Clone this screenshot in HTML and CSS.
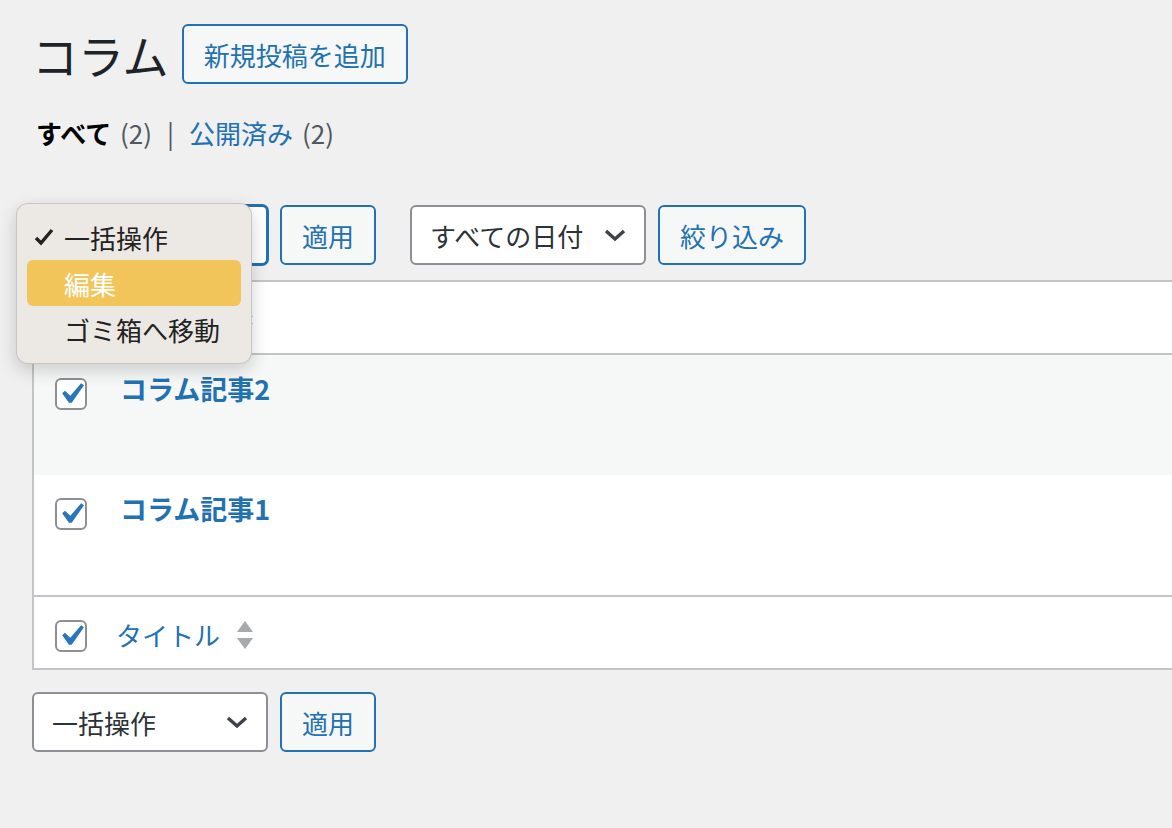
FILE: index.html
```html
<!DOCTYPE html>
<html lang="ja">
<head>
    <meta charset="UTF-8">
    <meta name="viewport" content="width=device-width, initial-scale=1.0">
    <title>コラム</title>
    <link rel="stylesheet" href="styles.css">
</head>
<body>
    <div class="wrap">
        <div class="page-head">
            <h1>コラム</h1>
            <a class="button" href="#">新規投稿を追加</a>
        </div>

        <ul class="subsubsub">
            <li class="current">すべて <span class="count">(2)</span></li>
            <li class="sep">|</li>
            <li><a href="#">公開済み</a> <span class="count">(2)</span></li>
        </ul>

        <div class="tablenav top">
            <div class="select focused">
                <span>一括操作</span>
                <svg class="chevron" viewBox="0 0 22 12" width="22" height="12"><path d="M2 2l9 8 9-8" fill="none" stroke="#3c434a" stroke-width="3.4"/></svg>
            </div>
            <a class="button" href="#">適用</a>
            <div class="select date">
                <span>すべての日付</span>
                <svg class="chevron" viewBox="0 0 22 12" width="22" height="12"><path d="M2 2l9 8 9-8" fill="none" stroke="#3c434a" stroke-width="3.4"/></svg>
            </div>
            <a class="button" href="#">絞り込み</a>
        </div>

        <table class="list-table">
            <thead>
                <tr>
                    <td class="check-col"><span class="checkbox"><svg viewBox="0 0 20 20" width="42" height="42"><path d="M14.83 4.89l1.34.94-5.81 8.38H9.02L5.78 9.67l1.34-1.25 2.57 2.4z" fill="#2a76bb"/></svg></span></td>
                    <th class="title-col"><a href="#">タイトル</a>
                        <svg class="sort" viewBox="0 0 18 30" width="18" height="30"><path d="M9 1l8 11H1z M1 18h16l-8 11z" fill="#a7aaad"/></svg>
                    </th>
                </tr>
            </thead>
            <tbody>
                <tr class="alt">
                    <td class="check-col"><span class="checkbox"><svg viewBox="0 0 20 20" width="42" height="42"><path d="M14.83 4.89l1.34.94-5.81 8.38H9.02L5.78 9.67l1.34-1.25 2.57 2.4z" fill="#2a76bb"/></svg></span></td>
                    <td class="title-cell"><a href="#">コラム記事2</a></td>
                </tr>
                <tr>
                    <td class="check-col"><span class="checkbox"><svg viewBox="0 0 20 20" width="42" height="42"><path d="M14.83 4.89l1.34.94-5.81 8.38H9.02L5.78 9.67l1.34-1.25 2.57 2.4z" fill="#2a76bb"/></svg></span></td>
                    <td class="title-cell"><a href="#">コラム記事1</a></td>
                </tr>
            </tbody>
            <tfoot>
                <tr>
                    <td class="check-col"><span class="checkbox"><svg viewBox="0 0 20 20" width="42" height="42"><path d="M14.83 4.89l1.34.94-5.81 8.38H9.02L5.78 9.67l1.34-1.25 2.57 2.4z" fill="#2a76bb"/></svg></span></td>
                    <th class="title-col"><a href="#">タイトル</a>
                        <svg class="sort" viewBox="0 0 18 30" width="18" height="30"><path d="M9 1l8 11H1z M1 18h16l-8 11z" fill="#a7aaad"/></svg>
                    </th>
                </tr>
            </tfoot>
        </table>

        <div class="tablenav bottom">
            <div class="select">
                <span>一括操作</span>
                <svg class="chevron" viewBox="0 0 22 12" width="22" height="12"><path d="M2 2l9 8 9-8" fill="none" stroke="#3c434a" stroke-width="3.4"/></svg>
            </div>
            <a class="button" href="#">適用</a>
        </div>
    </div>

    <!-- open menu of the top bulk action select -->
    <ul class="popup-menu">
        <li class="checked"><svg class="tick" viewBox="0 0 20 20" width="20" height="20"><path d="M2 11l5 5L18 3" fill="none" stroke="#222" stroke-width="3.4"/></svg>一括操作</li>
        <li class="hover">編集</li>
        <li>ゴミ箱へ移動</li>
    </ul>
</body>
</html>
```

FILE: styles.css
```css
body {
    margin: 0;
    padding: 0;
    font-family: "Noto Sans CJK JP", "Noto Sans", sans-serif;
    font-size: 26px;
    color: #1d2327;
    background-color: #f0f0f1;
    overflow: hidden;
    position: relative;
    height: 828px;
}

a {
    color: #2271b1;
    text-decoration: none;
}

.wrap {
    padding-left: 32px;
}

.page-head {
    display: flex;
    align-items: center;
    gap: 13px;
    padding-top: 24px;
}

.page-head h1 {
    margin: 0;
    font-size: 46px;
    font-weight: 400;
    line-height: 60px;
}

.button {
    display: inline-flex;
    align-items: center;
    box-sizing: border-box;
    height: 60px;
    padding: 0 20px;
    border: 2px solid #2271b1;
    border-radius: 6px;
    background-color: #f6f7f7;
    color: #2271b1;
    font-size: 26px;
}

.subsubsub {
    list-style: none;
    display: flex;
    gap: 10px;
    margin: 29px 0 0 4px;
    padding: 0;
    line-height: 40px;
    color: #50575e;
}

.subsubsub .current {
    color: #000;
    font-weight: 700;
}

.subsubsub .current .count {
    font-weight: 400;
    color: #50575e;
}

.subsubsub .count {
    margin-left: 3px;
}

.subsubsub .sep {
    margin: 0 5px;
}

.tablenav {
    display: flex;
    align-items: center;
    height: 60px;
}

.tablenav.top {
    margin-top: 52px;
}

.tablenav.bottom {
    margin-top: 22px;
}

.tablenav .button {
    margin-left: 12px;
}

.tablenav .date {
    margin-left: 34px;
}

.select {
    display: flex;
    align-items: center;
    justify-content: space-between;
    box-sizing: border-box;
    width: 236px;
    height: 60px;
    padding: 0 18px;
    border: 2px solid #8c8f94;
    border-radius: 6px;
    background-color: #fff;
    color: #2c3338;
}

.select.focused {
    border-color: #2271b1;
    box-shadow: 0 0 0 1px #2271b1;
}

.list-table {
    border-spacing: 0;
    width: calc(100% + 40px);
    margin-top: 15px;
    border: 2px solid #c3c4c7;
    background-color: #fff;
}

.list-table td,
.list-table th {
    padding: 0;
    text-align: left;
    vertical-align: top;
}

.check-col {
    width: 64px;
    padding: 23px 0 0 21px !important;
    box-sizing: border-box;
}

.checkbox {
    display: flex;
    align-items: center;
    justify-content: center;
    box-sizing: border-box;
    width: 32px;
    height: 32px;
    border: 2px solid #8c8f94;
    border-radius: 6px;
    background-color: #fff;
}

.checkbox svg {
    flex-shrink: 0;
    margin: -6px;
}

thead td,
thead th {
    height: 71px;
    border-bottom: 2px solid #c3c4c7;
}

tfoot td,
tfoot th {
    height: 71px;
    border-top: 2px solid #c3c4c7;
}

.title-col {
    font-weight: 400;
    vertical-align: middle !important;
    padding-left: 18px !important;
}

.title-col a {
    vertical-align: middle;
}

.sort {
    vertical-align: middle;
    margin-left: 10px;
}

tbody tr {
    height: 120px;
}

tbody tr.alt {
    background-color: #f6f7f7;
}

.title-cell {
    padding: 14px 0 0 22px !important;
    line-height: 40px;
    font-weight: 700;
    font-size: 27px;
}

.popup-menu {
    position: absolute;
    left: 16px;
    top: 203px;
    width: 236px;
    box-sizing: border-box;
    margin: 0;
    padding: 10px 10px 11px;
    list-style: none;
    background-color: #ece9e5;
    border: 1px solid rgba(0, 0, 0, 0.15);
    border-radius: 12px;
    box-shadow: 0 6px 18px rgba(0, 0, 0, 0.18);
    color: #222;
}

.popup-menu li {
    display: flex;
    align-items: center;
    height: 46px;
    padding-left: 37px;
    border-radius: 6px;
}

.popup-menu li.checked {
    padding-left: 7px;
}

.popup-menu .tick {
    margin-right: 10px;
}

.popup-menu li.hover {
    background-color: #f2c55a;
    color: #fff;
}
```
